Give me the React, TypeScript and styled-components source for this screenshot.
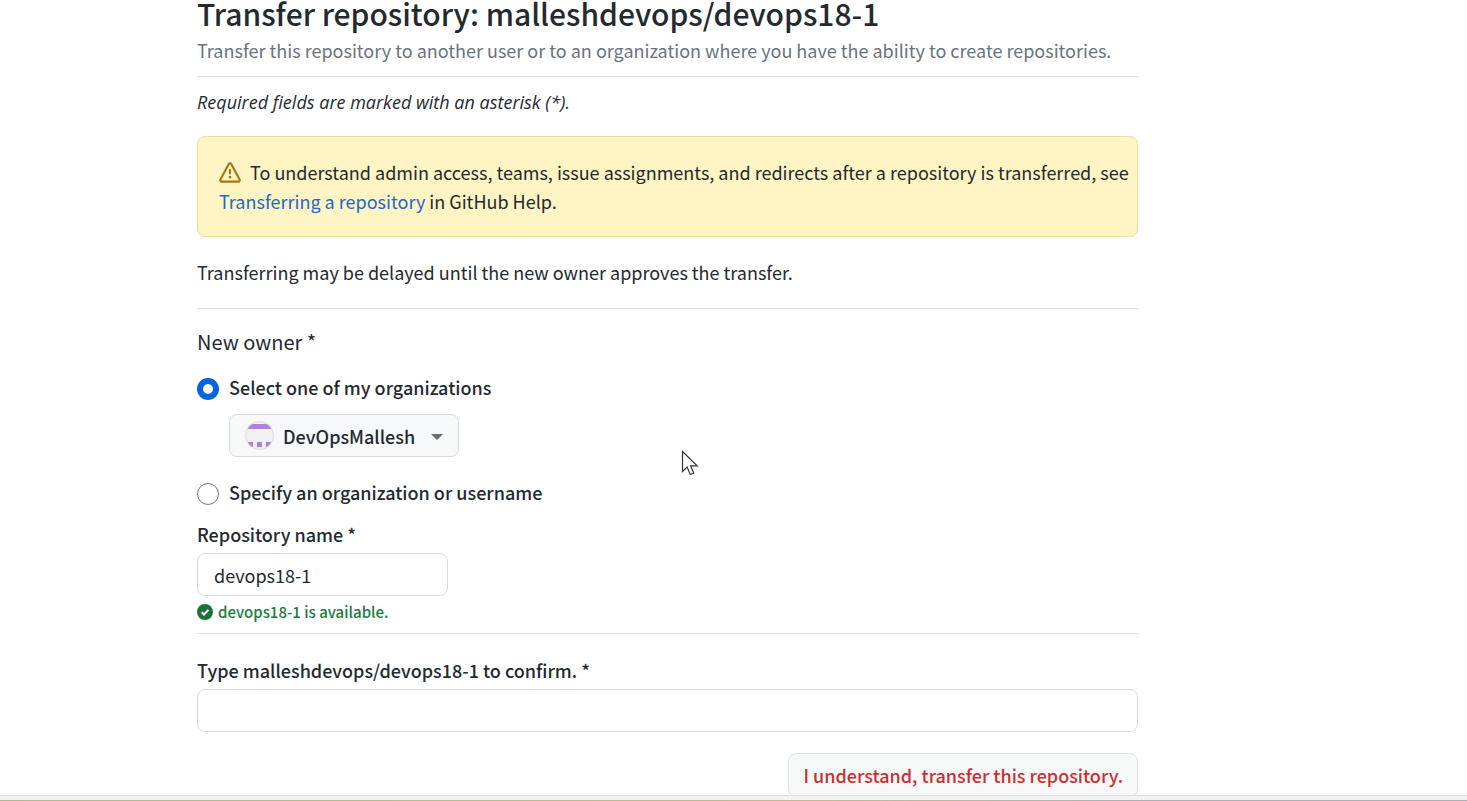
import React from "react";
import styled, { createGlobalStyle } from "styled-components";

const GlobalStyle = createGlobalStyle`
  *, *::before, *::after { box-sizing: border-box; }
  html, body { margin: 0; background: #fff; }
  html { height: 100%; overflow: hidden; }
  body, input, select, button {
    font-family: "Noto Sans CJK SC", "Noto Sans", sans-serif;
    font-size: 18px;
    line-height: 28px;
    color: #24292f;
  }
`;

const Page = styled.main`
  padding: 0 329px 0 197px;
`;

const Header = styled.header`
  padding-bottom: 12px;
  border-bottom: 1px solid #dfe3e7;
`;

const Title = styled.h1`
  margin: 0;
  font-size: 30px;
  line-height: 26px;
  font-weight: 500;
`;

const Subtitle = styled.p`
  margin: 10px 0 0;
  color: #6a737d;
`;

const Note = styled.p`
  margin: 11px 0 0;
  font-family: "Open Sans", "Noto Sans", sans-serif;
  font-style: italic;
`;

const Alert = styled.div`
  margin-top: 20px;
  padding: 21px 4px 20px 21px;
  border: 1px solid #ecdc9c;
  border-radius: 8px;
  background: #fff4c4;
  line-height: 29px;

  svg {
    width: 22px;
    height: 22px;
    margin-right: 9px;
    vertical-align: -4px;
  }
`;

const Link = styled.a`
  color: #2468c8;
  text-decoration: none;
`;

const Text = styled.p`
  margin: 21px 0 0;
`;

const Divider = styled.hr<{ $before: number }>`
  height: 1px;
  margin: ${(p) => p.$before}px 0 0;
  border: 0;
  background: #dfe3e7;
`;

const OwnerGroup = styled.fieldset`
  margin: 19px 0 0;
  padding: 0;
  border: 0;
`;

const Legend = styled.legend`
  padding: 0;
  font-size: 20px;
`;

const Option = styled.label<{ $before: number }>`
  display: flex;
  align-items: center;
  gap: 10px;
  margin-top: ${(p) => p.$before}px;
  font-weight: 500;
`;

const Radio = styled.input`
  appearance: none;
  width: 22px;
  height: 22px;
  margin: 4px 0 0;
  border: 1px solid #767676;
  border-radius: 50%;
  background: #fff;

  &:checked {
    border: 6px solid #0366e0;
  }
`;

const SelectBox = styled.div`
  position: relative;
  width: 230px;
  margin: 13px 0 0 32px;
`;

const OrgSelect = styled.select`
  appearance: none;
  display: block;
  width: 100%;
  height: 43px;
  padding: 0 36px 0 53px;
  border: 1px solid #d8dce0;
  border-radius: 8px;
  background: #f6f8fa;
  font-weight: 500;
`;

const Avatar = styled.svg`
  position: absolute;
  left: 16px;
  top: 7px;
  width: 29px;
  height: 29px;
  pointer-events: none;
`;

const Caret = styled.svg`
  position: absolute;
  right: 16px;
  top: 20px;
  width: 12px;
  height: 6px;
  pointer-events: none;
`;

const Field = styled.div<{ $before: number }>`
  display: flex;
  flex-direction: column;
  align-items: flex-start;
  gap: 5px;
  margin-top: ${(p) => p.$before}px;
`;

const FieldLabel = styled.label`
  font-weight: 500;
`;

const TextInput = styled.input<{ $wide?: boolean }>`
  width: ${(p) => (p.$wide ? "100%" : "251px")};
  height: 43px;
  padding: 0 16px;
  border: 1px solid #d8dce0;
  border-radius: 8px;
  background: #fff;
  outline: none;
`;

const Availability = styled.p`
  display: flex;
  align-items: center;
  gap: 5px;
  margin: 6px 0 0;
  font-size: 15px;
  line-height: 20px;
  font-weight: 500;
  color: #227a41;

  svg {
    width: 16px;
    height: 16px;
  }
`;

const Actions = styled.div`
  display: flex;
  justify-content: flex-end;
  margin-top: 21px;
`;

const DangerButton = styled.button`
  height: 44px;
  padding: 0 14px;
  border: 1px solid #dfe2e5;
  border-radius: 8px;
  background: #f6f8fa;
  color: #c9302f;
  font-weight: 500;
  white-space: nowrap;
`;

const WindowEdge = styled.div`
  position: fixed;
  left: 0;
  right: 0;
  bottom: 0;
  height: 6px;
  border-top: 1px solid #dedede;
  background: #f3f3f3;

  &::after {
    content: "";
    position: absolute;
    left: 0;
    right: 0;
    bottom: 0;
    height: 1px;
    background: linear-gradient(90deg, #a9bd8c, #b4bd88 35%, #c9b98a 55%, #a8b4b4 75%);
  }
`;

const Pointer = styled.svg`
  position: fixed;
  left: 681px;
  top: 450px;
  width: 18px;
  height: 27px;
  pointer-events: none;
`;

export default function App() {
  return (
    <>
      <GlobalStyle />
      <Page>
        <Header>
          <Title>Transfer repository: malleshdevops/devops18-1</Title>
          <Subtitle>
            Transfer this repository to another user or to an organization where you have the ability to create
            repositories.
          </Subtitle>
        </Header>
        <Note>Required fields are marked with an asterisk (*).</Note>
        <Alert>
          <svg viewBox="0 0 16 16" fill="#a97409" aria-hidden="true">
            <path d="M6.457 1.047c.659-1.234 2.427-1.234 3.086 0l6.082 11.378A1.75 1.75 0 0 1 14.082 15H1.918a1.75 1.75 0 0 1-1.543-2.575Zm1.763.707a.25.25 0 0 0-.44 0L1.698 13.132a.25.25 0 0 0 .22.368h12.164a.25.25 0 0 0 .22-.368Zm.53 3.996v2.5a.75.75 0 0 1-1.5 0v-2.5a.75.75 0 0 1 1.5 0ZM9 11a1 1 0 1 1-2 0 1 1 0 0 1 2 0Z" />
          </svg>
          To understand admin access, teams, issue assignments, and redirects after a repository is transferred, see{" "}
          <Link href="#help">Transferring a repository</Link> in GitHub Help.
        </Alert>
        <Text>Transferring may be delayed until the new owner approves the transfer.</Text>
        <Divider $before={22} />
        <OwnerGroup>
          <Legend>New owner *</Legend>
          <Option $before={17}>
            <Radio type="radio" name="owner" defaultChecked />
            Select one of my organizations
          </Option>
          <SelectBox>
            <OrgSelect aria-label="Organization">
              <option>DevOpsMallesh</option>
            </OrgSelect>
            <Avatar viewBox="0 0 29 29" aria-hidden="true">
              <defs>
                <clipPath id="avatar">
                  <circle cx="14.5" cy="14.5" r="14" />
                </clipPath>
              </defs>
              <g clipPath="url(#avatar)">
                <rect width="29" height="29" fill="#f0f0f0" />
                <path fill="#b07fdc" d="M3 3h23v5H3zM3 21h5v5H3zM12 21h5v5h-5zM21 21h5v5h-5z" />
              </g>
              <circle cx="14.5" cy="14.5" r="14" fill="none" stroke="#dcdce2" />
            </Avatar>
            <Caret viewBox="0 0 12 6" aria-hidden="true">
              <path d="M0 0h12L6 6z" fill="#676b74" />
            </Caret>
          </SelectBox>
          <Option $before={21}>
            <Radio type="radio" name="owner" />
            Specify an organization or username
          </Option>
        </OwnerGroup>
        <Field $before={14}>
          <FieldLabel htmlFor="repo">Repository name *</FieldLabel>
          <TextInput id="repo" defaultValue="devops18-1" />
        </Field>
        <Availability>
          <svg viewBox="0 0 16 16" aria-hidden="true">
            <circle cx="8" cy="8" r="8" fill="#1a7239" />
            <path d="M4.6 8.2 7 10.5l4.4-4.6" fill="none" stroke="#fff" strokeWidth="2" />
          </svg>
          devops18-1 is available.
        </Availability>
        <Divider $before={11} />
        <Field $before={22}>
          <FieldLabel htmlFor="confirm">Type malleshdevops/devops18-1 to confirm. *</FieldLabel>
          <TextInput id="confirm" $wide />
        </Field>
        <Actions>
          <DangerButton type="button">I understand, transfer this repository.</DangerButton>
        </Actions>
      </Page>
      <WindowEdge />
      <Pointer viewBox="0 0 18 27" aria-hidden="true">
        <path
          d="M1.5 1.5v20l4.6-4.4 3.2 7.4 3.4-1.5-3.1-7.2h6.6z"
          fill="#fff"
          stroke="#333"
          strokeWidth="1.2"
        />
      </Pointer>
    </>
  );
}
